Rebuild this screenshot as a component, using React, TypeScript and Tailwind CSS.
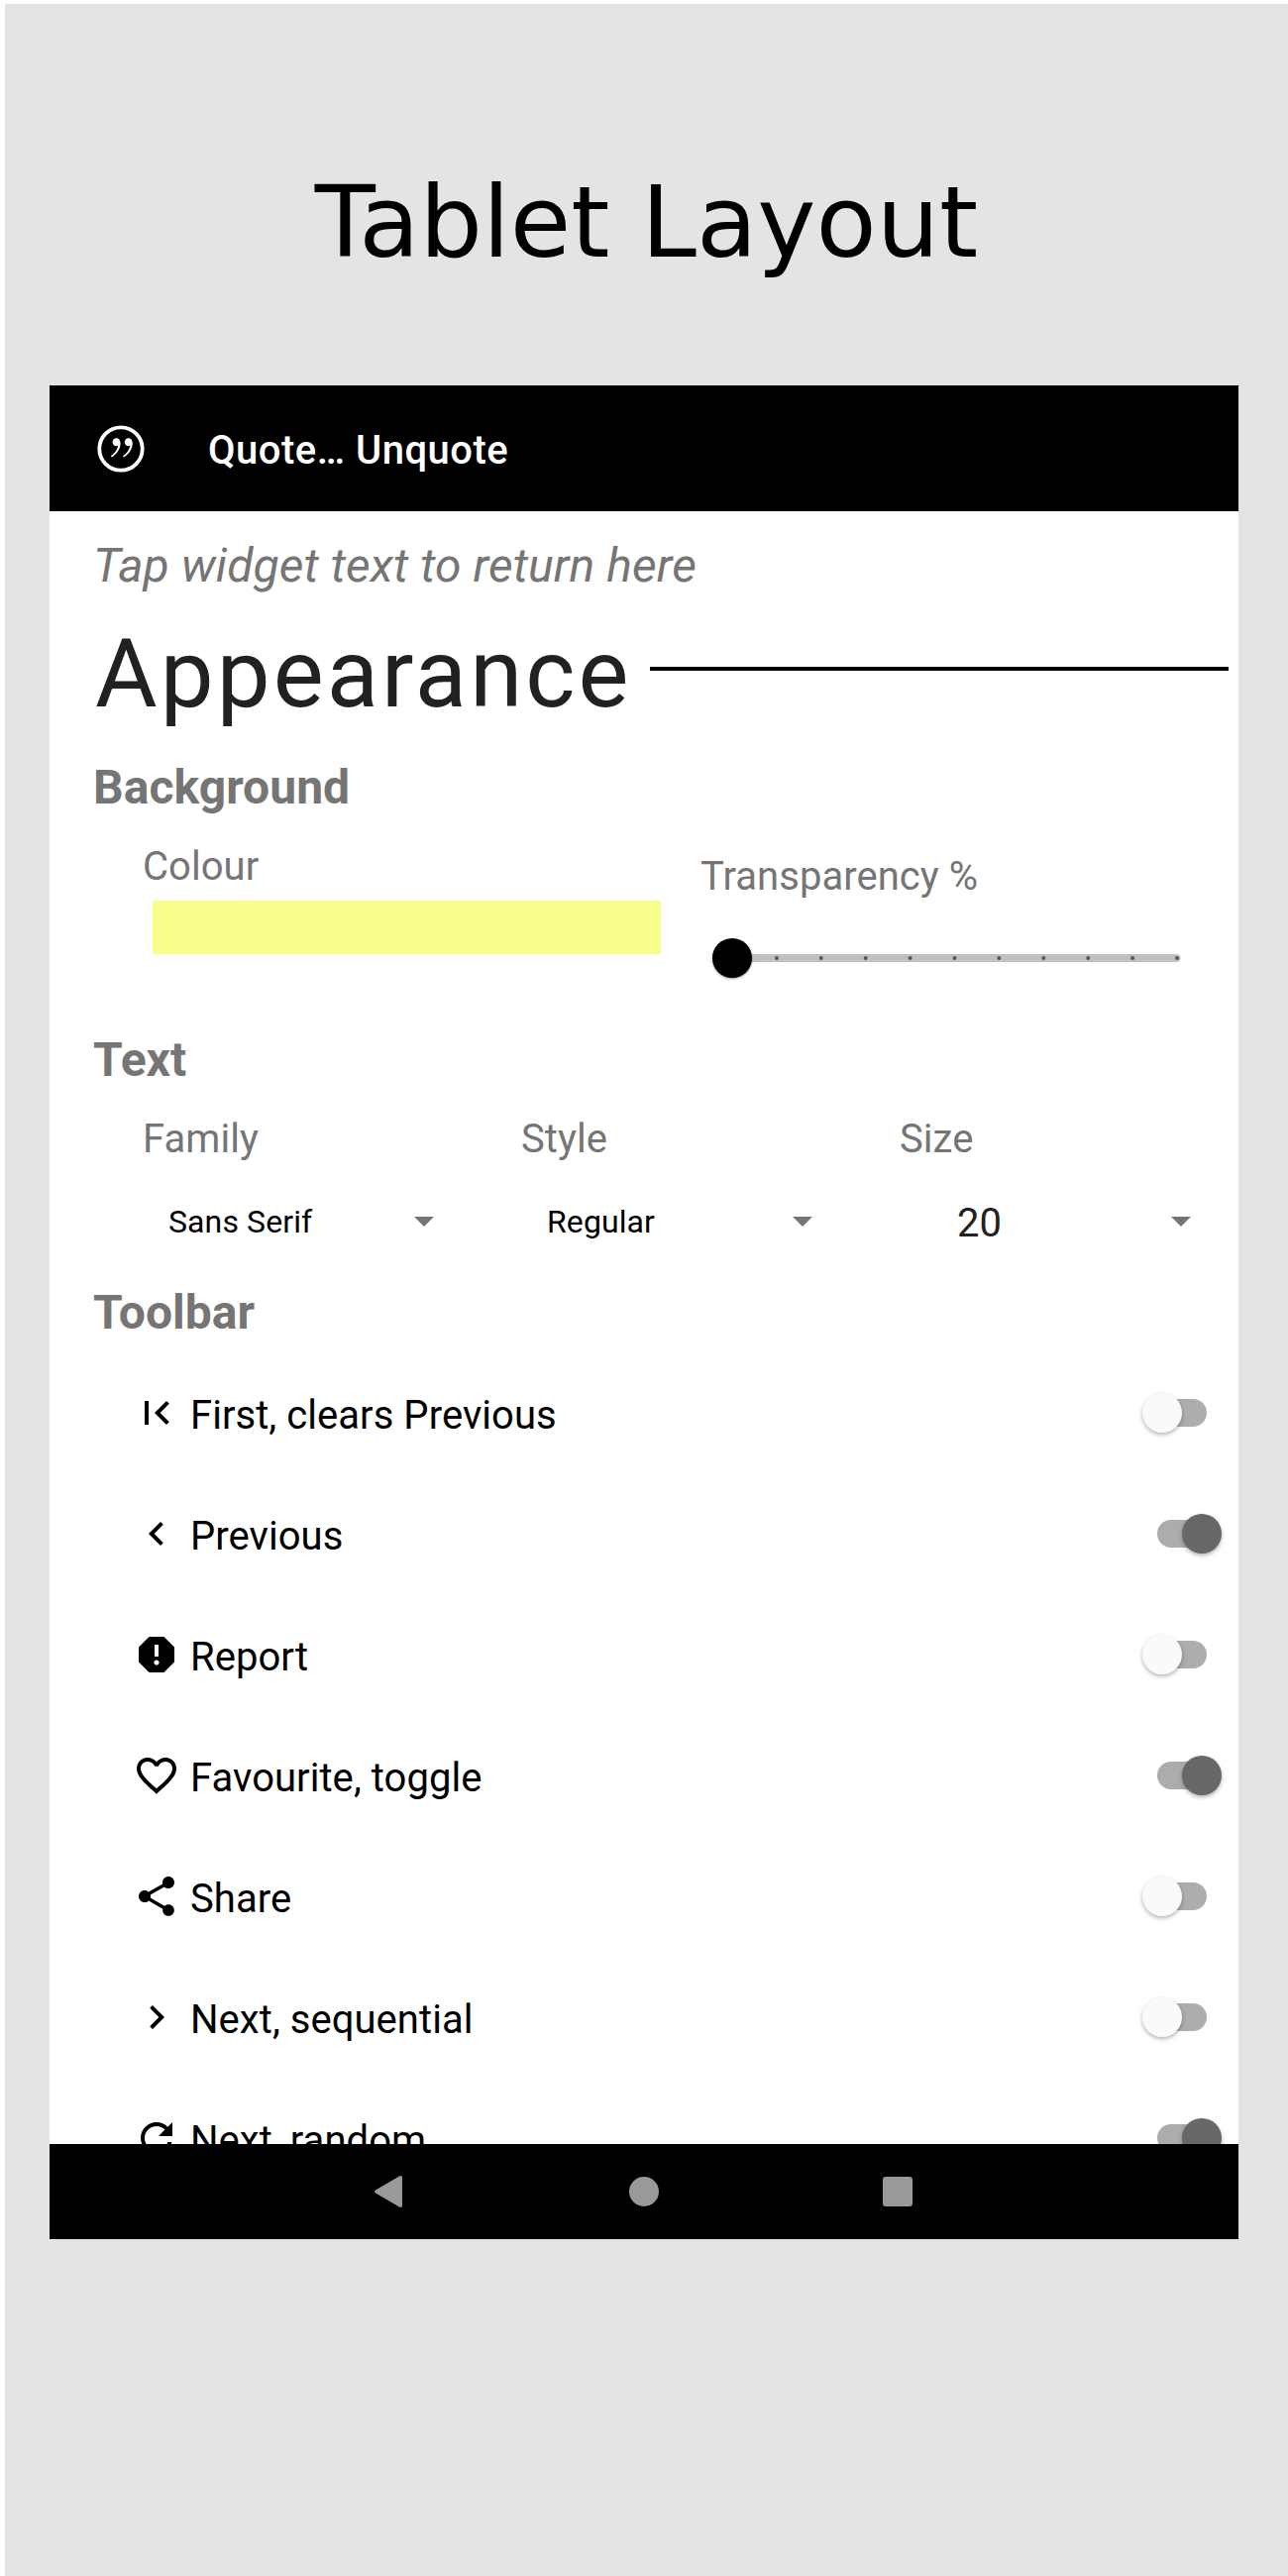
import type { ReactNode } from "react";

const Icon = ({ d }: { d: string }) => (
  <svg viewBox="0 0 24 24" className="size-12 shrink-0" fill="#000">
    <path d={d} />
  </svg>
);

const rows = [
  { label: "First, clears Previous", on: false, d: "M18.41 16.59L13.82 12l4.59-4.59L17 6l-6 6 6 6zM6 6h2v12H6z" },
  { label: "Previous", on: true, d: "M15.41 7.41L14 6l-6 6 6 6 1.41-1.41L10.83 12z" },
  {
    label: "Report",
    on: false,
    d: "M15.73 3H8.27L3 8.27v7.46L8.27 21h7.46L21 15.73V8.27L15.73 3zM12 17.3c-.72 0-1.3-.58-1.3-1.3s.58-1.3 1.3-1.3 1.3.58 1.3 1.3-.58 1.3-1.3 1.3zm1-4.3h-2V7h2v6z",
  },
  {
    label: "Favourite, toggle",
    on: true,
    d: "M16.5 3c-1.74 0-3.41.81-4.5 2.09C10.91 3.81 9.24 3 7.5 3 4.42 3 2 5.42 2 8.5c0 3.78 3.4 6.86 8.55 11.54L12 21.35l1.45-1.32C18.6 15.36 22 12.28 22 8.5 22 5.42 19.58 3 16.5 3zm-4.4 15.55l-.1.1-.1-.1C7.14 14.24 4 11.39 4 8.5 4 6.5 5.5 5 7.5 5c1.54 0 3.04.99 3.57 2.36h1.87C13.46 5.99 14.96 5 16.5 5c2 0 3.5 1.5 3.5 3.5 0 2.89-3.14 5.74-7.9 10.05z",
  },
  {
    label: "Share",
    on: false,
    d: "M18 16.08c-.76 0-1.44.3-1.96.77L8.91 12.7c.05-.23.09-.46.09-.7s-.04-.47-.09-.7l7.05-4.11c.54.5 1.25.81 2.04.81 1.66 0 3-1.34 3-3s-1.34-3-3-3-3 1.34-3 3c0 .24.04.47.09.7L8.04 9.81C7.5 9.31 6.79 9 6 9c-1.66 0-3 1.34-3 3s1.34 3 3 3c.79 0 1.5-.31 2.04-.81l7.12 4.16c-.05.21-.08.43-.08.65 0 1.61 1.31 2.92 2.92 2.92s2.92-1.31 2.92-2.92-1.31-2.92-2.92-2.92z",
  },
  { label: "Next, sequential", on: false, d: "M10 6L8.59 7.41 13.17 12l-4.58 4.59L10 18l6-6z" },
  {
    label: "Next, random",
    on: true,
    d: "M17.65 6.35C16.2 4.9 14.21 4 12 4c-4.42 0-7.99 3.58-7.99 8s3.57 8 7.99 8c3.73 0 6.84-2.55 7.73-6h-2.08c-.82 2.33-3.04 4-5.65 4-3.31 0-6-2.69-6-6s2.69-6 6-6c1.66 0 3.14.69 4.22 1.78L13 11h7V4l-2.35 2.35z",
  },
];

const Toggle = ({ on }: { on: boolean }) =>
  on ? (
    <div className="mr-[17px] flex h-7 w-[65px] items-center justify-end rounded-l-full bg-linear-to-r from-[#aeabad] from-70% to-transparent to-70%">
      <div className="size-10 shrink-0 rounded-full bg-[#686765] shadow-[0_2px_4px_rgba(0,0,0,0.3)]" />
    </div>
  ) : (
    <div className="mr-8 flex h-7 w-[65px] items-center rounded-r-full bg-linear-to-l from-[#adadad] from-60% to-transparent to-60%">
      <div className="size-10 shrink-0 rounded-full bg-[#fafafa] shadow-[0_2px_4px_rgba(0,0,0,0.3)]" />
    </div>
  );

const Section = ({ children }: { children: ReactNode }) => (
  <h2 className="h-14 pl-11 text-[48px] leading-14 font-bold tracking-[0.05px] text-[#757575]">{children}</h2>
);

const Spinner = ({ label, children }: { label: string; children: ReactNode }) => (
  <div className="w-[382px] shrink-0">
    <div className="h-12 pt-px text-[40px] leading-12 tracking-[0.05px] text-[#757575]">{label}</div>
    <div className="mt-9 flex h-12 items-center">
      {children}
      <svg viewBox="0 0 20 10" className="mr-[88px] ml-auto h-2.5 w-5" fill="#757575">
        <path d="M0 0h20L10 10z" />
      </svg>
    </div>
  </div>
);

const Quote = ({ x }: { x: number }) => (
  <path
    transform={`translate(${x} 13.2)`}
    fill="#fff"
    d="M5 0C7.6 0 9.2 2.2 9.200 5.400 9.200 11 5.400 16.400.4 19.400L-.6 18.100C3.200 15.500 5.900 11.800 6.800 7.500 6.200 7.800 5.600 8 5 8 2.800 8 1.200 6.300 1.200 4 1.200 1.700 2.800 0 5 0z"
  />
);

const ticks = [1, 2, 3, 4, 5, 6, 7, 8, 9, 10];

export default function App() {
  return (
    <div className="h-[2600px] w-[1300px] overflow-hidden bg-white pt-1 pl-[5px]">
      <div className="h-[2596px] bg-[#e4e4e4] pl-[45px] font-['Roboto',sans-serif]">
        <h1 className="flex h-[385px] w-[1205px] justify-center pt-[156px] font-['DejaVu_Sans',sans-serif] text-[100px] leading-[130px] whitespace-nowrap text-black">
          Tablet Layout
        </h1>
        <div className="flex h-[1871px] w-[1200px] flex-col bg-white">
          <header className="flex h-[127px] shrink-0 items-center bg-black pl-12 text-white">
            <svg viewBox="0 0 48 48" className="size-12 shrink-0">
              <circle cx="24" cy="24" r="21.7" fill="none" stroke="#fff" strokeWidth="3.8" />
              <Quote x={14.4} />
              <Quote x={26.6} />
            </svg>
            <span className="mt-1 ml-16 text-[40px] leading-12 font-medium tracking-[0.5px]">Quote… Unquote</span>
          </header>

          <main className="h-[1648px] shrink-0 overflow-hidden pt-[27px]">
            <p className="h-14 pl-11 text-[48px] leading-14 tracking-[0.08px] text-[#757575] italic">
              Tap widget text to return here
            </p>
            <div className="mt-[25px] flex h-28 pr-2.5 pl-[46px]">
              <span className="w-[560px] text-[96px] leading-28 tracking-[3.1px] text-[#212121]">Appearance</span>
              <div className="mt-[49px] h-1 flex-1 bg-black" />
            </div>

            <div className="mt-[31px]">
              <Section>Background</Section>
            </div>
            <div className="mt-[27px] flex h-[192px] pl-[94px] text-[40px] leading-12 tracking-[0.05px] text-[#757575]">
              <div className="w-[563px]">
                <div className="h-12 pt-px">Colour</div>
                <div className="mt-[11px] ml-2.5 h-[54px] w-[513px] bg-[#f8fe89]" />
              </div>
              <div className="pt-2.5">
                <div className="h-12 pt-px">Transparency %</div>
                <svg viewBox="0 0 500 60" className="mt-[29px] h-[60px] w-[500px] overflow-visible">
                  <rect x="28" y="26" width="456.5" height="8" rx="4" fill="#c0c0c0" />
                  {ticks.map((t) => (
                    <circle key={t} cx={32 + t * 44.9} cy="30" r="2" fill="#555" />
                  ))}
                  <circle cx="32" cy="30" r="20" fill="#000" className="drop-shadow-[0_1px_1px_rgba(0,0,0,0.4)]" />
                </svg>
              </div>
            </div>

            <Section>Text</Section>
            <div className="mt-[27px] flex pl-[94px]">
              <Spinner label="Family">
                <span className="pl-[26px] text-[32px] tracking-[0.1px] text-black">Sans Serif</span>
              </Spinner>
              <Spinner label="Style">
                <span className="pl-[26px] text-[32px] tracking-[0.1px] text-black">Regular</span>
              </Spinner>
              <Spinner label="Size">
                <span className="pt-1 pl-[58px] text-[40px] text-[#212121]">20</span>
              </Spinner>
            </div>

            <div className="mt-10">
              <Section>Toolbar</Section>
            </div>
            <div className="mt-3">
              {rows.map((r) => (
                <div key={r.label} className="flex h-[122px] items-center pl-[84px]">
                  <Icon d={r.d} />
                  <span className="mt-1.5 ml-2.5 flex-1 text-[40px] leading-12 tracking-[0.05px] text-black">
                    {r.label}
                  </span>
                  <Toggle on={r.on} />
                </div>
              ))}
            </div>
          </main>

          <nav className="flex h-24 shrink-0 items-center bg-black pl-[328px]">
            <svg viewBox="0 0 28 32" className="h-8 w-7" fill="#999">
              <path d="M25 .4L1 14.5Q-.8 16 1 17.5L25 31.6Q28 32.6 28 30V2Q28-.6 25 .4z" />
            </svg>
            <div className="ml-[229px] size-[30px] rounded-full bg-[#999]" />
            <div className="ml-[226px] size-[30px] rounded-[3px] bg-[#999]" />
          </nav>
        </div>
      </div>
    </div>
  );
}
